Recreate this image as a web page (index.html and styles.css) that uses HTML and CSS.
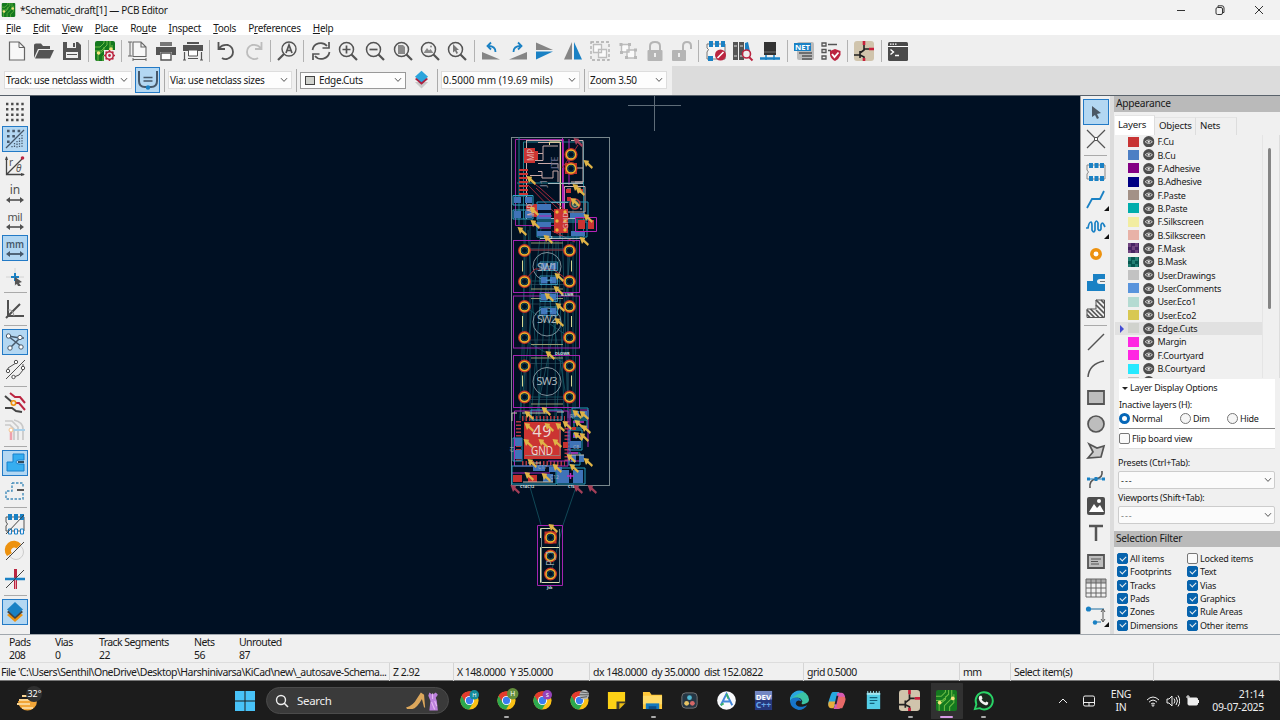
FILE: index.html
```html
<!DOCTYPE html>
<html lang="en">
<head>
<meta charset="utf-8">
<title>PCB Editor</title>
<link rel="stylesheet" href="styles.css">
</head>
<body>
<svg class="defs" aria-hidden="true">
  <defs>
    <symbol id="eye" viewBox="0 0 12 12"><circle cx="6" cy="6" r="5.9" fill="#4d4d4d"/><path d="M2.2 6Q6 2.400 9.800 6Q6 9.600 2.200 6Z" fill="none" stroke="#ddd" stroke-width=".9"/><circle cx="6" cy="6" r="1.1" fill="#eee"/></symbol>
    <symbol id="down" viewBox="0 0 8 6"><path d="M1 1.2L4 4.4L7 1.2" fill="none" stroke="#555" stroke-width="1"/></symbol>
    <symbol id="mag" viewBox="0 0 20 20"><circle cx="8.5" cy="8.5" r="7" fill="none" stroke="#545454" stroke-width="1.5"/><path d="M13.5 13.5L19 19" stroke="#545454" stroke-width="2.2"/></symbol>
    <symbol id="chrome" viewBox="-1 0 22 22"><circle cx="10" cy="11" r="9.5" fill="#fbc116"/><path d="M10 11L1.8 6.2A9.5 9.5 0 0 1 18.3 6.5L10 6.5Z" fill="#e33b2e"/><path d="M10 11L1.8 6.2A9.5 9.5 0 0 0 9.5 20.5L14 13Z" fill="#2da94f"/><path d="M10 6.5H18.3A9.5 9.5 0 0 0 1.8 6.2L6 13Z" fill="#e33b2e"/><circle cx="10" cy="11" r="4.8" fill="#fff"/><circle cx="10" cy="11" r="3.8" fill="#3a7df0"/></symbol>
    <symbol id="board" viewBox="0 0 20 20"><rect width="20" height="20" rx="2" fill="#14791f"/><path d="M0 6H5L9 2V0M0 10H6L12 4V0M3 20V14L9 9V6M8 20V15L15 8V0M13 20V16L17 12V4" fill="none" stroke="#6ebd45" stroke-width="1"/><circle cx="3.5" cy="12" r="1.8" fill="#f4e27c"/><circle cx="16" cy="8" r="1.8" fill="#f4e27c"/></symbol>
    <symbol id="sch" viewBox="0 0 20 20"><rect width="20" height="20" rx="3" fill="#d0c4ac"/><path d="M0 14H6M6 10V17M6 12L10 9V4M6 14L10 16V20M10 8H15" stroke="#222" stroke-width="1.6" fill="none"/><path d="M10 0V4M15 8H20M10 17V20" stroke="#c8203c" stroke-width="2.6"/></symbol>
    <g id="arr"><path d="M-4.500-4L1-3.200L.5-1.300L5 3L3.800 5L-.5 1L-2 3Z"/></g>
    <g id="via"><circle r="5.3" fill="#001023" stroke="#c33429" stroke-width="2.4"/><circle r="4.5" fill="none" stroke="#e9b52d" stroke-width="1.5"/><circle r="3" fill="#001023" stroke="#1a6970" stroke-width=".7"/></g>
    <g id="pair"><rect width="6.5" height="6.5" fill="#4277bd"/><rect x="9" width="6.5" height="6.5" fill="#4277bd"/><path d="M-1-1H16.5V7.5H-1ZM5 3.2H11" fill="none" stroke="#40b8dd" stroke-width=".7"/></g>
    <g id="sw"><rect x="513.5" y="0" width="66" height="52" fill="none" stroke="#a324b0"/><path d="M531 2.5H563M531 48.5H563" stroke="#969b72"/><path d="M522.5 20V31M571.5 20V31" stroke="#d8d78f"/><circle cx="547" cy="26" r="14" fill="none" stroke="#8b9da6" stroke-width=".9"/><rect x="526" y="8" width="42" height="36" fill="none" stroke="#345665" stroke-width=".6"/></g>
  </defs>
</svg>
<div class="app">
  <header class="title"><svg width="15" height="14" viewBox="0 0 20 20"><use href="#board"/></svg><span>*Schematic_draft[1] — PCB Editor</span>
    <div class="winbtns"><svg viewBox="0 0 12 12"><path d="M2 6.5H10"/></svg><svg viewBox="0 0 12 12"><rect x="2" y="3.5" width="6.5" height="7" rx="1.5"/><path d="M4 3V1.8H8Q10 1.8 10 4V8.5H9"/></svg><svg viewBox="0 0 12 12"><path d="M2 2L10 10M10 2L2 10"/></svg></div>
  </header>
  <nav class="menu"><span><u>F</u>ile</span><span><u>E</u>dit</span><span><u>V</u>iew</span><span><u>P</u>lace</span><span>Ro<u>u</u>te</span><span><u>I</u>nspect</span><span><u>T</u>ools</span><span>P<u>r</u>eferences</span><span><u>H</u>elp</span></nav>

  <div class="bar">
    <i><svg viewBox="0 0 20 20"><path d="M2.5 1H12L17.5 6.5V19H2.5Z" fill="#f7f7f7" stroke="#666" stroke-width="1.2"/><path d="M12 1V6.5H17.5" fill="none" stroke="#666"/></svg></i>
    <i><svg viewBox="0 0 20 20"><path d="M0 17V4Q0 2.5 2 2.5H7L9 5H16V8H4Z" fill="#545454"/><path d="M5 9H20L16 17.5H1Z" fill="#545454"/></svg></i>
    <i><svg viewBox="0 0 20 20"><path d="M1 1H16L19 4V19H1Z" fill="#545454"/><path d="M5 1H14V7H5ZM4 11H16V17H4Z" fill="#efefef"/><path d="M11 2H13V6H11ZM5 13H15V14H5Z" fill="#545454"/></svg></i>
    <b></b>
    <i><svg viewBox="0 0 20 20"><use href="#board"/><rect x="9" y="9" width="11" height="11" fill="#efefef"/><circle cx="14.5" cy="14.5" r="3.8" fill="#efefef" stroke="#bb2540" stroke-width="1.6"/><circle cx="14.5" cy="14.5" r="1.4" fill="#bb2540"/><path d="M14.5 9V11M14.5 18V20M9 14.5H11M18 14.5H20M10.6 10.6L12 12M17 17L18.4 18.4M18.4 10.6L17 12M10.6 18.4L12 17" stroke="#bb2540" stroke-width="1.6"/></svg></i>
    <b></b>
    <i><svg viewBox="0 0 20 20"><path d="M5 1H13L18 6V15.5H5ZM13 1V6H18" fill="#f7f7f7" stroke="#666" stroke-width="1.1"/><path d="M2 1V15M0 1H4M0 15H4M5 18.5H18M5 17V20M18 17V20" stroke="#666" stroke-width="1"/></svg></i>
    <i><svg viewBox="0 0 20 20"><path d="M4 1H16V5H4Z" fill="#777"/><path d="M0 6H20V14H16V11H4V14H0Z" fill="#545454"/><path d="M5 12H15V19H5Z" fill="#fff" stroke="#545454" stroke-width="1.4"/></svg></i>
    <i><svg viewBox="0 0 20 20"><path d="M4 1H16V3H4ZM0 4H20V10H0Z" fill="#545454"/><path d="M5.5 9H14.5V15H5.5Z" fill="#fff" stroke="#545454"/><path d="M1.5 11V19M18.5 11V19M0 19H3M17 19H20M5 17.5H15" stroke="#545454" stroke-width="1.2"/></svg></i>
    <b></b>
    <i><svg viewBox="0 0 20 20"><path d="M3 7Q7 3 12 4Q17 6 17 11T11 18Q8 18.500 6 17" fill="none" stroke="#545454" stroke-width="1.800"/><path d="M2.500 1V8H9" fill="none" stroke="#545454" stroke-width="1.8"/></svg></i>
    <i><svg viewBox="0 0 20 20"><path d="M17 7Q13 3 8 4Q3 6 3 11T9 18Q12 18.500 14 17" fill="none" stroke="#bdbdbd" stroke-width="1.800"/><path d="M17.500 1V8H11" fill="none" stroke="#bdbdbd" stroke-width="1.8"/></svg></i>
    <b></b>
    <i><svg viewBox="0 0 20 20"><circle cx="12" cy="8" r="7" fill="none" stroke="#545454" stroke-width="1.4"/><path d="M7 13L1 19" stroke="#545454" stroke-width="2.2"/><path d="M9 12L12 4L15 12M10 9.5H14" fill="none" stroke="#545454" stroke-width="1.7"/></svg></i>
    <b></b>
    <i><svg viewBox="0 0 20 20"><path d="M1.5 9A8.3 8.3 0 0 1 16 5M18.5 11A8.3 8.3 0 0 1 4 15" fill="none" stroke="#545454" stroke-width="1.7"/><path d="M18 1V7H11.500M2 19V13H8.500" fill="none" stroke="#545454" stroke-width="1.700"/></svg></i>
    <i><svg viewBox="0 0 20 20"><use href="#mag"/><path d="M8.5 4.5V12.5M4.5 8.5H12.5" stroke="#545454" stroke-width="1.7"/></svg></i>
    <i><svg viewBox="0 0 20 20"><use href="#mag"/><path d="M4.5 8.5H12.5" stroke="#545454" stroke-width="1.7"/></svg></i>
    <i><svg viewBox="0 0 20 20"><use href="#mag"/><path d="M5 4H10L12 6V13H5Z" fill="#8a8a8a"/></svg></i>
    <i><svg viewBox="0 0 20 20"><use href="#mag"/><path d="M3.5 12L7 7L9 9.5L10.5 8L13.5 12Z" fill="#8a8a8a"/><circle cx="11" cy="5.5" r="1" fill="#8a8a8a"/></svg></i>
    <i><svg viewBox="0 0 20 20"><use href="#mag"/><path d="M6 3L12 9H9.5L11 12L9.5 13L8 10L6 11.5Z" fill="#777"/></svg></i>
    <b></b>
    <i><svg viewBox="0 0 20 20"><path d="M1 11L19 18.5H1Z" fill="#858585"/><path d="M14.500 11Q14.500 5 7.500 5" fill="none" stroke="#1a81c4" stroke-width="1.800"/><path d="M10 1.500L6.500 5L10 8.500" fill="none" stroke="#1a81c4" stroke-width="1.800"/></svg></i>
    <i><svg viewBox="0 0 20 20"><path d="M19 11L1 18.5H19Z" fill="#858585"/><path d="M5.500 11Q5.500 5 12.500 5" fill="none" stroke="#1a81c4" stroke-width="1.800"/><path d="M10 1.500L13.500 5L10 8.500" fill="none" stroke="#1a81c4" stroke-width="1.800"/></svg></i>
    <i><svg viewBox="0 0 20 20"><path d="M1 1.500L18 9H1Z" fill="#858585"/><path d="M1 10.5H18L1 18.5Z" fill="#1a81c4"/></svg></i>
    <i><svg viewBox="0 0 20 20"><path d="M9 1V18.5H1Z" fill="#858585"/><path d="M11 1V18.5H19Z" fill="#1a81c4"/></svg></i>
    <i><svg viewBox="0 0 20 20"><rect x="1" y="1" width="18" height="18" fill="none" stroke="#aaa" stroke-width="1.3" stroke-dasharray="3 2"/><path d="M3.5 3.5H11.5V11.5H3.5ZM8.5 8.5H16.5V16.5H8.5Z" fill="#fafafa" stroke="#bdbdbd" stroke-width="1.3"/></svg></i>
    <i><svg viewBox="0 0 20 20"><path d="M3.5 3.5H11V11H3.5ZM9 9H17V17H9Z" fill="#fafafa" stroke="#bdbdbd" stroke-width="1.4"/><path d="M1.500 2H4.500V5H1.500ZM10 2H13V5H10ZM2 10H5V13H2ZM7 15H10V18H7ZM16 7.500H19V10.500H16ZM16 15H19V18H16Z" fill="#b8b8b8"/></svg></i>
    <i><svg viewBox="0 0 20 20"><path d="M5 9V5Q5 1 10 1T15 5V9" fill="none" stroke="#b5b5b5" stroke-width="2"/><rect x="2.5" y="9" width="15" height="11" rx="1" fill="#b5b5b5"/><path d="M10 12V16" stroke="#eee" stroke-width="2"/></svg></i>
    <i><svg viewBox="0 0 20 20"><path d="M11 9V5Q11 1 15 1T19 5V8" fill="none" stroke="#b5b5b5" stroke-width="2"/><rect x="0" y="9" width="14" height="11" rx="1" fill="#b5b5b5"/><path d="M7 12V16" stroke="#eee" stroke-width="2"/></svg></i>
    <b></b>
    <i><svg viewBox="0 0 20 20"><path d="M1 3V7Q4 8 1 11V18H19V3Z" fill="#f5f5f5" stroke="#777"/><path d="M3 0H7V6H3ZM9 0H13V6H9ZM15 0H19V6H15ZM2 15H7V20H2Z" fill="#1a81c4"/><circle cx="14.5" cy="14" r="5.5" fill="#bb2540"/><path d="M11.5 17L17.5 11" stroke="#fff" stroke-width="1.6"/></svg></i>
    <i><svg viewBox="0 0 20 20"><path d="M0 1H5V19H0ZM6 1H11V19H6Z" fill="#545454"/><path d="M1 5H4M7 5H10M1 15H4M7 15H10" stroke="#ddd"/><path d="M12 2L15 1L18 15H12Z" fill="#1a81c4"/><circle cx="13.5" cy="13" r="4" fill="#eee" stroke="#bb2540" stroke-width="1.6"/><path d="M16 16L19.5 19.5" stroke="#bb2540" stroke-width="2"/></svg></i>
    <i><svg viewBox="0 0 20 20"><path d="M4 1H16V14H4Z" fill="#333"/><path d="M4 11H16" stroke="#777"/><path d="M0 17.500H20" stroke="#1a81c4" stroke-width="2.500"/><path d="M6 14V19M14 14V19" stroke="#1a81c4" stroke-width="1.500"/></svg></i>
    <b></b>
    <i><svg viewBox="0 0 20 20"><rect x="3" y="1" width="17" height="18" rx="2" fill="#bbb"/><path d="M5 12H18M8 15H18M8 18H18" stroke="#555" stroke-width="1.3"/><rect y="2" width="17" height="8" fill="#1a81c4"/><text x="1" y="8.8" font-size="7.5" font-weight="bold" fill="#fff" textLength="15" lengthAdjust="spacingAndGlyphs">NET</text></svg></i>
    <i><svg viewBox="0 0 20 20"><path d="M1 2H5V5H1ZM1 8.500H5V11.5H1ZM1 15H5V18H1Z" fill="none" stroke="#545454" stroke-width="1.3"/><path d="M7 3.500H16M7 9.500H10" stroke="#545454" stroke-width="1.5"/><path d="M9 10L14 8L19.500 10V14Q18 18 14 20Q10 18 9 14Z" fill="#bb2540"/><path d="M11 13L13.500 16L17.500 11.500" fill="none" stroke="#fff" stroke-width="1.8"/></svg></i>
    <b></b>
    <i><svg viewBox="0 0 20 20"><use href="#sch"/></svg></i>
    <b></b>
    <i><svg viewBox="0 0 20 20"><rect y="1" width="20" height="19" rx="1.500" fill="#4a4a4a"/><path d="M0 5.500H20" stroke="#fff"/><path d="M2 3.200H3.500M4.500 3.200H6M7 3.200H8.500" stroke="#fff" stroke-width="1.200"/><path d="M2.500 8.500L5.500 11L2.500 13.500M7 14.500H11" fill="none" stroke="#fff" stroke-width="1.400"/></svg></i>
  </div>

  <div class="bar2">
    <div class="tools2">
      <div class="combo w1"><span>Track: use netclass width</span><svg><use href="#down"/></svg></div>
      <div class="auto"><svg viewBox="0 0 20 20"><path d="M1 1V11Q1 17 7 17H13Q19 17 19 11V1" fill="none" stroke="#46586a" stroke-width="2"/><path d="M5.500 7.500H14.500M5.500 11H14.500" stroke="#46586a" stroke-width="1.300"/><circle cx="10" cy="17.500" r="2.200" fill="#1a81c4"/></svg></div>
      <b></b>
      <div class="combo w2"><span>Via: use netclass sizes</span><svg><use href="#down"/></svg></div>
      <b></b>
      <div class="combo w3"><em></em><span>Edge.Cuts</span><svg><use href="#down"/></svg></div>
      <svg class="lay" viewBox="0 0 16 20"><path d="M1 12L8 19L15 12Z" fill="#c8c8c8"/><path d="M1 9L8 15L15 9L8 5Z" fill="#aa1f3f"/><path d="M8 0L15 6.500L8 12.500L1 6.500Z" fill="#2ba4dc"/></svg>
      <b></b>
      <div class="combo w4"><span>0.5000 mm (19.69 mils)</span><svg><use href="#down"/></svg></div>
      <b></b>
      <div class="combo w5"><span>Zoom 3.50</span><svg><use href="#down"/></svg></div>
    </div>
  </div>

  <main class="work">
    <div class="vbar left">
      <i><svg viewBox="0 0 20 20"><path d="M1 2H19M1 7.300H19M1 12.700H19M1 18H19" stroke="#4a4a4a" stroke-width="2.400" stroke-dasharray="2.400 2.700"/></svg></i>
      <i class="on"><svg viewBox="0 0 20 20"><path d="M2 2H16M2 7.300H10M2 12.700H5" stroke="#46586a" stroke-width="2.600" stroke-dasharray="2.600 2.700"/><path d="M1 19L19 1" stroke="#46586a" stroke-width="1.200"/><path d="M17 6V19M14.500 9V19M12 12V19M9.500 14V19M7 17V19" stroke="#46586a" stroke-width="1.300" stroke-dasharray="1.300 1.300"/></svg></i>
      <i><svg viewBox="0 0 20 20"><path d="M1.500 1V18.500H19M1.500 18.500L17 3" fill="none" stroke="#444" stroke-width="1.300"/><path d="M0 4L1.500 0L3 4M16 17L20 18.500L16 20" fill="#444"/><circle cx="17.500" cy="2" r="1.800" fill="#bb2540"/><text x="4" y="9.500" font-size="10" fill="#555">r</text><text x="11" y="16" font-size="10" font-style="italic" fill="#555">θ</text></svg></i>
      <i><svg viewBox="0 0 20 20"><text x="10" y="10" text-anchor="middle" font-size="12" fill="#505050">in</text><path d="M3 16H17" stroke="#505050" stroke-width="1.600"/><path d="M5 13L1 16L5 19ZM15 13L19 16L15 19Z" fill="#505050"/></svg></i>
      <i><svg viewBox="0 0 20 20"><text x="10" y="10" text-anchor="middle" font-size="11" fill="#505050" textLength="15">mil</text><path d="M3 16H17" stroke="#505050" stroke-width="1.600"/><path d="M5 13L1 16L5 19ZM15 13L19 16L15 19Z" fill="#505050"/></svg></i>
      <i class="on"><svg viewBox="0 0 20 20"><text x="10" y="10" text-anchor="middle" font-size="11" font-weight="600" fill="#46586a" textLength="18" lengthAdjust="spacingAndGlyphs">mm</text><path d="M3 16H17" stroke="#46586a" stroke-width="1.800"/><path d="M5 13L1 16L5 19ZM15 13L19 16L15 19Z" fill="#46586a"/></svg></i>
      <i><svg viewBox="0 0 20 20"><path d="M1 11H19M10 2V20" stroke="#ccc" stroke-width=".800"/><path d="M6 11H14M10 7V15" stroke="#1a81c4" stroke-width="2"/><path d="M10 11L17 16L14 17L16 20H13L12 18L10 19Z" fill="#555"/></svg></i>
      <b></b>
      <i><svg viewBox="0 0 20 20"><path d="M3 1V17H19M1 19L15 5" fill="none" stroke="#505050" stroke-width="2"/><path d="M3 11Q8 10 9 17" fill="none" stroke="#999"/></svg></i>
      <b></b>
      <i class="on"><svg viewBox="0 0 20 20"><path d="M3 4L17 15M5 16L15 6M3 4L15 6H19" stroke="#46586a" stroke-width="1.500" fill="none"/><g fill="#fff" stroke="#46586a"><circle cx="3.500" cy="4" r="2.200"/><circle cx="15" cy="5.500" r="2.200"/><circle cx="5" cy="16" r="2.200"/><circle cx="16" cy="15" r="2.200"/></g></svg></i>
      <i><svg viewBox="0 0 20 20"><path d="M1 20L20 1M3 11V9L11 4M9 18L14 16L18 11V5" stroke="#505050" fill="none"/><g fill="#fff" stroke="#505050"><circle cx="3" cy="12" r="1.700"/><circle cx="11" cy="3" r="1.700"/><circle cx="8.500" cy="18" r="1.700"/><circle cx="18" cy="9" r="1.700"/></g></svg></i>
      <b></b>
      <i><svg viewBox="0 0 20 20"><path d="M5 0L10 4H15L20 10M8 10H14L20 17" stroke="#bb2540" stroke-width="2" fill="none"/><path d="M0 3L8 10M0 15H7L11 18L17 19" stroke="#444" stroke-width="2" fill="none"/><circle cx="8.500" cy="10" r="2.200" fill="#eee" stroke="#ed920f" stroke-width="1.600"/></svg></i>
      <i><svg viewBox="0 0 20 20"><path d="M0 1H7L13 7V20M0 5H5L9 9V20M9 0Q18 2 18 9V20" fill="none" stroke="#c9c9c9" stroke-width="1.700"/><path d="M6 11V20" stroke="#efa1ad" stroke-width="2.500"/><path d="M6 10H20" stroke="#a8d0ea" stroke-width="2"/><circle cx="6" cy="10" r="2" fill="#fff" stroke="#f5c48b"/></svg></i>
      <b></b>
      <i class="on"><svg viewBox="0 0 20 20"><path d="M8 1H19V7H14Q11 7 11 9T14 11H19V18H2V9H8Z" fill="#36aef0" stroke="#1680cc"/><path d="M13 9H19" stroke="#354c5d" stroke-width="2"/></svg></i>
      <i><svg viewBox="0 0 20 20"><path d="M7 2H18V7M18 12V18H1V10H7V2" fill="none" stroke="#418bb9" stroke-width="1.400" stroke-dasharray="2.500 1.500"/><path d="M12 9H19" stroke="#555" stroke-width="2"/></svg></i>
      <b></b>
      <i><svg viewBox="0 0 20 20"><path d="M1 3V8Q4 10 1 12V17H19V3Z" fill="none" stroke="#555"/><path d="M3 0H7V6H3ZM9 0H13V6H9ZM15 0H19V6H15Z" fill="#1a81c4"/><path d="M3.500 15H6.500V20H3.500ZM9.500 15H12.500V20H9.500ZM15.500 15H18.500V20H15.500Z" fill="#eef" stroke="#1a81c4"/><path d="M1 20L19 1" stroke="#444"/></svg></i>
      <i><svg viewBox="0 0 20 20"><circle cx="11" cy="11" r="7.500" fill="none" stroke="#ccc"/><path d="M2 15A8.300 8.300 0 1 1 16 3L11.500 7.500A3 3 0 0 0 7 12Z" fill="#ed920f"/><path d="M1 19L19 1" stroke="#444"/></svg></i>
      <i><svg viewBox="0 0 20 20"><path d="M10.500 0V20" stroke="#bb2540" stroke-width="3"/><path d="M0 10H20" stroke="#1a81c4" stroke-width="2.500"/><path d="M10.500 11V20" stroke="#e79aa6"/><path d="M1 19L19 1" stroke="#444"/></svg></i>
      <b></b>
      <i class="on"><svg viewBox="0 0 20 20"><path d="M2 13L10 20L18 13L10 8Z" fill="#ed920f"/><path d="M2 10L10 17L18 10L10 4Z" fill="#444"/><path d="M10 0L18 7.500L10 15L2 7.500Z" fill="#1a81c4"/></svg></i>
    </div>

    <svg class="canvas" viewBox="30 96 1050 538">
      <path d="M628 105.500H681M654.500 96V131" stroke="#5e6c78"/>
      <g fill="none" stroke="#17606d" stroke-width=".700">
        <path d="M524 212V420M526 212L520 420M530 225V410M545 240L531 418M549 240L538 418M553 240L546 418M556 240L555 418M558 240L564 410M562 225L568 418M568 230V418M573 205V415M577 215L575 410M541 228L520 418M528 230L540 418M560 300L535 420M548 290L570 420M571 242L556 418M530 487L541 525M576 487L563 525L551 573"/>
        <path d="M524 250H569M524 281H569M524 306L569 337M524 397H569M524 340L569 366"/>
      </g>
      <rect x="511.500" y="137.500" width="98" height="348" fill="none" stroke="#78878c"/>

      <g fill="none">
        <path d="M515.500 139.500H563.500V225.500H515.500Z" stroke="#9c229f"/>
        <path d="M523.500 219V142H583.500V237M519 137V225M514 196H532M517 183H584" stroke="#207d8d"/>
        <path d="M526.500 140.500H562M526.500 140V219M538 142.500H560V238M538 153.500H543V146H558M527 160.500H543V153.500M538 163.500H558V168M538 171.500H542V178H553V171H558V182M530 175.500H542" stroke="#c8a9a8"/>
        <path d="M549.500 145V142H560M560.500 142V220" stroke="#e7dc91"/>
        <path d="M564.500 186.500H585V212H564.500ZM567 189H571M580 209H582M571 140.500H583V182H571" stroke="#cdb3b2"/>
        <path d="M562.500 138V212M564 188V212M569 139V185" stroke="#b624b9"/>
        <path d="M528 185L556 214M536 188L568 218M527 178L540 188L568 213M562 168L571 156L578 145M564 218H590M552 231L575 242" stroke="#a1293b"/>
        <path d="M551 218.500H575M551 202.500H568M548 183.500H583M540 238.500H585" stroke="#a8bac0"/>
        <path d="M537 202H588V220H537ZM537 222H587V237H537Z" stroke="#2694b5"/>
      </g>
      <g fill="#cb3432"><path d="M524 148H535V151H538V160H535V163H524ZM526 204H538V217H526ZM554 209H568V233H554Z"/><path d="M519 169H528V171H519ZM519 173H528V175H519ZM519 177H528V179H519ZM519 181H528V183H519ZM519 185H528V187H519ZM519 189H528V191H519ZM519 193H528V195H519ZM566 189H571V193H566ZM578 189H583V193H578ZM567 197H571V201H567ZM578 220H585V229H578ZM588 220H594V229H588Z"/></g>
      <g fill="#3f73b8"><path d="M514 197H521V203H514ZM525 197H532V203H525ZM514 211H521V218H514ZM525 211H532V218H525ZM537 204H551V210H537ZM537 213H551V219H537ZM537 222H551V227H537ZM537 231H551V236H537ZM570 213H585V218H570ZM571 231H585V236H571Z"/></g>
      <path d="M513 195.500H533V205H513ZM513 210H533V219H513Z" fill="none" stroke="#2fa4c5"/>
      <path d="M575.500 217.500H596.500V231.500H575.500ZM539 216H552M539 228H551" fill="none" stroke="#b824b8"/>
      <circle cx="575" cy="204" r="5" fill="#2c4b4c" stroke="#c0403c" stroke-width="1.500"/><circle cx="575" cy="204" r="2.500" fill="none" stroke="#a0b8a0"/>
      <path d="M575 168H583M575 182H583" stroke="#ccb2b1"/>
      <use href="#via" x="571" y="154.500"/><path d="M565 163H577V174H565Z" fill="#bf332b"/><use href="#via" x="571" y="168.500"/>
      <g fill="#e8b739"><circle cx="557" cy="212" r="1.700"/><circle cx="565" cy="212" r="1.700"/><circle cx="557" cy="221" r="1.700"/><circle cx="565" cy="221" r="1.700"/><circle cx="557" cy="230" r="1.700"/><circle cx="565" cy="230" r="1.700"/></g>
      <g class="ptext" fill="#e2afad"><text transform="translate(533.500 161) rotate(-90)" font-size="8">MP</text><text transform="translate(533.500 216) rotate(-90)" font-size="8">MP</text><text transform="translate(568 229) rotate(-90)" font-size="7.500">GND</text><text transform="translate(558 169) rotate(-90)" font-size="9" fill="#6d718f">JTE</text><text transform="translate(547 187) rotate(-90)" font-size="9" fill="#838597">J1</text></g>

      <use href="#sw" y="240.500"/><use href="#sw" y="296"/><use href="#sw" y="355.500"/>
      <path d="M524 250H570M524 281L535 269H553L569 281" fill="none" stroke="#a52c39"/>
      <g><use href="#via" x="524.500" y="250.500"/><use href="#via" x="569.500" y="250.500"/><use href="#via" x="524.500" y="281.500"/><use href="#via" x="569.500" y="281.500"/><use href="#via" x="524.500" y="306.500"/><use href="#via" x="569.500" y="306.500"/><use href="#via" x="524.500" y="337.500"/><use href="#via" x="569.500" y="337.500"/><use href="#via" x="524.500" y="366"/><use href="#via" x="569.500" y="366"/><use href="#via" x="524.500" y="397"/><use href="#via" x="569.500" y="397"/></g>
      <g><use href="#pair" x="541" y="263"/><use href="#pair" x="541" y="277"/><use href="#pair" x="541" y="294"/><use href="#pair" x="541" y="308"/></g>
      <g class="ptext" fill="#aab4ba" font-size="11" text-anchor="middle"><text x="547" y="270.500" textLength="20">SW1</text><text x="547" y="323" textLength="20">SW2</text><text x="547" y="385" textLength="21">SW3</text></g>
      <g class="ptext" fill="#dbe0e0" font-size="4" font-weight="bold"><text x="561" y="295.500">B.LWR</text><text x="555" y="355">DLOWR</text><text x="547" y="589">Jtk</text><text x="520" y="488">C14C12</text><text x="568" y="488">C18</text><text x="545" y="239">R12</text></g>

      <g stroke="#b13940" fill="none"><path d="M522 418.500H565M522 463.500H565" stroke-width="5" stroke-dasharray="1.500 2"/><path d="M518.500 421V462M567 421V462" stroke-width="5" stroke-dasharray="1.500 2"/></g>
      <path d="M524 422H561V459H524Z" fill="#cb3432"/><path d="M525 455.500H560V427" fill="none" stroke="#9f7773"/>
      <path d="M514.500 411H568V466H514.500ZM512 473H550M548 461H584M570 409V455M580 410H588V447" fill="none" stroke="#ad26b3"/>
      <path d="M513 438H522V461H513ZM512 466H556V484H512ZM557 468H585V484H557ZM569 430H582V450H569ZM569 453H580V465H569ZM572 408H588V418H572ZM574 420H587V428H574ZM531 410H562V420H531Z" fill="none" stroke="#249dbd"/>
      <path d="M515 438H522V446H515ZM515 450H522V459H515ZM557 470H569V483H557ZM573 470H583V483H573ZM543 474H553V482H543ZM573 411H579V417H573ZM581 411H587V417H581ZM570 441H576V448H570ZM576 441H581V448H576ZM571 455H576V462H571ZM579 455H584V462H579ZM533 465H545V471H533ZM549 467H562V472H549ZM573 433H578V438H573Z" fill="#3f73b8"/>
      <path d="M513 475H522V482H513ZM528 475H537V482H528ZM572 427H576V430H572ZM563 442H568V448H563Z" fill="#c6312f"/><path d="M567 476H574M570.500 473V479M573 422H584M573 436H583M571 453H578" stroke="#bf2cc1" stroke-width="1.500"/>
      <path d="M522 413H547M512 421V413H517M557 412H564M528 463H541M571 455H584M523 482H553" stroke="#c6c8b8" fill="none"/>
      <g class="ptext" fill="#ebd8d4" text-anchor="middle"><text x="542" y="437" font-size="16" textLength="19">49</text><text x="542" y="455" font-size="12" textLength="22" lengthAdjust="spacingAndGlyphs">GND</text></g>
      <g class="ptext" font-size="5" fill="#a2acb6"><text x="550" y="479">C12</text><text x="538" y="469">C17</text><text x="570" y="418">R7</text><text x="573" y="449">C8</text><text transform="translate(514 452) rotate(-90)">C1</text></g>

      <path d="M537.500 525.500H562.500V585.500H537.500Z" fill="none" stroke="#a424b0"/><path d="M540.500 547.500H559.500V582.500H540.500ZM540.500 538V528.500H550" fill="none" stroke="#dedfb1"/><path d="M541.500 529V583M559.500 529V583" stroke="#73868a"/>
      <path d="M544.500 531.500H556.500V543.500H544.500Z" fill="#c33429"/><use href="#via" x="550.500" y="537.500"/><use href="#via" x="550.500" y="556"/><use href="#via" x="550.500" y="574"/><g class="ptext"><text transform="translate(554 566) rotate(-90)" font-size="10" fill="#9ba5a9">P_1</text></g>
      <g fill="#dfb447"><use href="#arr" x="588" y="164"/><use href="#arr" x="531" y="180"/><use href="#arr" x="577" y="188"/><use href="#arr" x="580" y="191"/><use href="#arr" x="575" y="202"/><use href="#arr" x="534" y="211"/><use href="#arr" x="535" y="224"/><use href="#arr" x="522" y="231"/><use href="#arr" x="548" y="239"/><use href="#arr" x="588" y="218"/><use href="#arr" x="584" y="241"/><use href="#arr" x="559" y="277"/><use href="#arr" x="558" y="290"/><use href="#arr" x="549" y="297"/><use href="#arr" x="560" y="307"/><use href="#arr" x="559" y="322"/><use href="#arr" x="550" y="355"/><use href="#arr" x="546" y="411"/><use href="#arr" x="529" y="415"/><use href="#arr" x="577" y="414"/><use href="#arr" x="584" y="415"/><use href="#arr" x="529" y="427"/><use href="#arr" x="549" y="427"/><use href="#arr" x="560" y="427"/><use href="#arr" x="567" y="425"/><use href="#arr" x="579" y="424"/><use href="#arr" x="586" y="429"/><use href="#arr" x="578" y="436"/><use href="#arr" x="584" y="437"/><use href="#arr" x="528" y="443"/><use href="#arr" x="543" y="443"/><use href="#arr" x="557" y="443"/><use href="#arr" x="532" y="463"/><use href="#arr" x="557" y="468"/><use href="#arr" x="571" y="458"/><use href="#arr" x="588" y="462"/><use href="#arr" x="574" y="468"/><use href="#arr" x="546" y="477"/><use href="#arr" x="529" y="476"/><use href="#arr" x="553" y="528"/></g>
      <g fill="#a43f58"><use href="#arr" x="515" y="489"/><use href="#arr" x="578" y="489"/><use href="#arr" x="592" y="489"/><use href="#arr" x="578" y="142"/></g>
    </svg>

    <div class="vbar right">
      <i class="on"><svg viewBox="0 0 20 20"><path d="M6 4L15 11L11 12L13 16L11 17L9 13L6 15Z" fill="#4b5865"/></svg></i>
      <i><svg viewBox="0 0 20 20"><path d="M1 1L19 19M19 1L1 19" stroke="#545454" stroke-width="1.200"/><path d="M8.500 8.500H11.500V11.500H8.500Z" fill="#fff" stroke="#545454"/></svg></i><b></b>
      <i><svg viewBox="0 0 20 20"><path d="M1 3V8Q4 10 1 12V17H19V3Z" fill="none" stroke="#888"/><path d="M3 1H7V6H3ZM8.500 1H12.500V6H8.500ZM14 1H18V6H14ZM3 14H7V19H3ZM8.500 14H12.500V19H8.500ZM14 14H18V19H14Z" fill="#1a81c4"/></svg></i>
      <i class="more"><svg viewBox="0 0 20 20"><path d="M1 18L6 9H14L18 1" fill="none" stroke="#1a81c4" stroke-width="1.800"/></svg></i>
      <i class="more"><svg viewBox="0 0 20 20"><path d="M0 11H2Q3 5 5 5Q6 5 6 9V13Q8 17 9 13V6Q10.500 2 12 6V12Q13.500 15 15 12V8Q16 4 18 8L19 10" fill="none" stroke="#1a81c4" stroke-width="1.700"/></svg></i>
      <i><svg viewBox="0 0 20 20"><circle cx="10" cy="10" r="4.200" fill="#fff" stroke="#ed920f" stroke-width="3.500"/></svg></i>
      <i><svg viewBox="0 0 20 20"><path d="M7 2H19V7H14Q11 7 11 9.500T14 12H19V19H1V9H7Z" fill="#1a81c4"/><path d="M14 9.500H19" stroke="#777"/></svg></i>
      <i><svg viewBox="0 0 20 20"><path d="M10 1H18.500V18.500H1V10H10Z" fill="none" stroke="#545454"/><path d="M10 1L18.500 9.500M10 6L18.500 14.500M10 11L17.500 18.500M15 1L18.500 4.500M4.500 10L13 18.500M1 11L8.500 18.500M1 15.500L4 18.500" stroke="#545454" stroke-width="1.700"/></svg></i><b></b>
      <i><svg viewBox="0 0 20 20"><path d="M2 18L18 2" stroke="#545454" stroke-width="1.500"/></svg></i>
      <i><svg viewBox="0 0 20 20"><path d="M2 18Q3 5 18 2" fill="none" stroke="#545454" stroke-width="1.500"/></svg></i>
      <i><svg viewBox="0 0 20 20"><path d="M2 4H18V17H2Z" fill="#bdbdbd" stroke="#545454" stroke-width="1.800"/></svg></i>
      <i><svg viewBox="0 0 20 20"><circle cx="10" cy="10" r="8" fill="#bdbdbd" stroke="#545454" stroke-width="1.700"/></svg></i>
      <i><svg viewBox="0 0 20 20"><path d="M3 3L11 7L18 5L15 16L2 17L7 11Z" fill="#ccc" stroke="#545454" stroke-width="1.700"/></svg></i>
      <i><svg viewBox="0 0 20 20"><path d="M4 19Q3 11 10 10T16 2" fill="none" stroke="#545454" stroke-width="1.600"/><path d="M1 10H19" stroke="#1a81c4"/><path d="M1 10H4M16 10H19M10 8V12" stroke="#1a81c4" stroke-width="3"/></svg></i>
      <i><svg viewBox="0 0 20 20"><rect x="1" y="1" width="18" height="18" rx="2" fill="#4d4d4d"/><path d="M3 16L8 8L11 12L14 9L18 16Z" fill="#fff"/><circle cx="13" cy="5" r="2" fill="#fff"/></svg></i>
      <i><svg viewBox="0 0 20 20"><path d="M3 3H17M10 3V18" stroke="#545454" stroke-width="2.500"/></svg></i>
      <i><svg viewBox="0 0 20 20"><path d="M2 4H18V17H2Z" fill="#bdbdbd" stroke="#545454" stroke-width="1.800"/><path d="M5 8H15M5 10.500H12M5 13H13" stroke="#545454"/></svg></i>
      <i><svg viewBox="0 0 20 20"><path d="M0 1H20V5H0Z" fill="#aaa"/><path d="M0 1H20V19H0ZM5 1V19M10 1V19M15 1V19M0 5H20M0 10H20M0 15H20" fill="none" stroke="#666"/></svg></i>
      <i class="more"><svg viewBox="0 0 20 20"><path d="M3 4H18M8 17H15" stroke="#1a6d9f"/><path d="M17 5V16M15 7L17 4L19 7M15 14L17 17L19 14" stroke="#555" fill="none"/><circle cx="2.500" cy="4" r="2.600" fill="#1a81c4"/><circle cx="9" cy="17.500" r="2.200" fill="#1a81c4"/></svg></i>
    </div>

    <aside>
      <h2>Appearance</h2>
      <div class="tabs"><span class="sel">Layers</span><span>Objects</span><span>Nets</span></div>
      <div class="layers">
        <ul>
          <li><s class="red"></s><svg><use href="#eye"/></svg>F.Cu</li><li><s class="blue"></s><svg><use href="#eye"/></svg>B.Cu</li><li><s class="purple"></s><svg><use href="#eye"/></svg>F.Adhesive</li><li><s class="navy"></s><svg><use href="#eye"/></svg>B.Adhesive</li><li><s class="taupe"></s><svg><use href="#eye"/></svg>F.Paste</li><li><s class="teal"></s><svg><use href="#eye"/></svg>B.Paste</li><li><s class="lemon"></s><svg><use href="#eye"/></svg>F.Silkscreen</li><li><s class="pink"></s><svg><use href="#eye"/></svg>B.Silkscreen</li><li><s class="fmask"></s><svg><use href="#eye"/></svg>F.Mask</li><li><s class="bmask"></s><svg><use href="#eye"/></svg>B.Mask</li><li><s class="gray"></s><svg><use href="#eye"/></svg>User.Drawings</li><li><s class="sky"></s><svg><use href="#eye"/></svg>User.Comments</li><li><s class="mint"></s><svg><use href="#eye"/></svg>User.Eco1</li><li><s class="gold"></s><svg><use href="#eye"/></svg>User.Eco2</li><li class="cur"><s class="cuts"></s><svg><use href="#eye"/></svg>Edge.Cuts</li><li><s class="mag"></s><svg><use href="#eye"/></svg>Margin</li><li><s class="mag"></s><svg><use href="#eye"/></svg>F.Courtyard</li><li><s class="cyan"></s><svg><use href="#eye"/></svg>B.Courtyard</li><li><s class="gray"></s><svg><use href="#eye"/></svg></li>
        </ul>
        <div class="scroll"></div>
      </div>
      <section class="opts">
        <h3>Layer Display Options</h3>
        <p>Inactive layers (H):</p>
        <div class="radios"><label><em class="r ron"></em>Normal</label><label><em class="r"></em>Dim</label><label><em class="r"></em>Hide</label></div>
        <div class="flip"><em class="c"></em>Flip board view</div>
      </section>
      <section class="pre"><p>Presets (Ctrl+Tab):</p><div class="pick">---<svg><use href="#down"/></svg></div><p>Viewports (Shift+Tab):</p><div class="pick dim">---<svg><use href="#down"/></svg></div></section>
      <h2>Selection Filter</h2>
      <div class="filter"><span><em class="c k"></em>All items</span><span><em class="c"></em>Locked items</span><span><em class="c k"></em>Footprints</span><span><em class="c k"></em>Text</span><span><em class="c k"></em>Tracks</span><span><em class="c k"></em>Vias</span><span><em class="c k"></em>Pads</span><span><em class="c k"></em>Graphics</span><span><em class="c k"></em>Zones</span><span><em class="c k"></em>Rule Areas</span><span><em class="c k"></em>Dimensions</span><span><em class="c k"></em>Other items</span></div>
    </aside>
  </main>

  <div class="stats"><div>Pads<br>208</div><div>Vias<br>0</div><div>Track Segments<br>22</div><div>Nets<br>56</div><div>Unrouted<br>87</div></div>
  <div class="status"><span class="file">File 'C:\Users\Senthil\OneDrive\Desktop\Harshinivarsa\KiCad\new\_autosave-Schema...</span><span>Z 2.92</span><span>X 148.0000&nbsp; Y 35.0000</span><span>dx 148.0000&nbsp; dy 35.0000&nbsp; dist 152.0822</span><span>grid 0.5000</span><span>mm</span><span>Select item(s)</span><span></span></div>

  <footer>
    <div class="weather"><svg viewBox="0 0 30 30"><path d="M5 15H24A9.500 9.500 0 0 1 5 15Z" fill="#f2a638"/><path d="M9 10H15M6 14H20M4 18H17M9 22H20" stroke="#f9d493" stroke-width="2"/><circle cx="21" cy="8" r="8" fill="#303030"/><text x="14.500" y="11" font-size="9.500" fill="#fff" textLength="14" lengthAdjust="spacingAndGlyphs">32°</text></svg></div>
    <svg class="start" viewBox="0 0 20 20"><path d="M0 0H9.500V9.500H0ZM10.500 0H20V9.500H10.500ZM0 10.500H9.500V20H0ZM10.500 10.500H20V20H10.500Z" fill="#48c2f8"/></svg>
    <div class="search"><svg viewBox="0 0 14 14"><circle cx="6" cy="6" r="4.500" fill="none" stroke="#eee" stroke-width="1.400"/><path d="M9 9L13 13" stroke="#eee" stroke-width="1.600"/></svg><span>Search</span><svg class="shoe" viewBox="0 0 32 22"><path d="M0 17Q7 15 10 9L14 3L17 5L18 17H17L15 9Q10 18 6 18.500H1Z" fill="#dca75c"/><path d="M22 3L25 5L28 3L30 5L28 8L29 11L30 20H22L23 11L21 6Z" fill="#bb80dc"/><path d="M25 4V9M24 12L27 19M27 11L29 16" stroke="#e6b8f2" stroke-width="1"/></svg></div>
    <div class="apps">
      <i><svg viewBox="0 0 22 22"><use href="#chrome"/><circle cx="16" cy="5" r="5" fill="#138b9a"/><text x="14" y="7.200" font-size="6" fill="#fff">H</text></svg></i>
      <i class="run"><svg viewBox="0 0 22 22"><use href="#chrome"/><circle cx="17.500" cy="4" r="6" fill="#648f3c"/><text x="15" y="6.500" font-size="7" fill="#fff">H</text></svg></i>
      <i><svg viewBox="0 0 22 22"><use href="#chrome"/><circle cx="16" cy="5" r="5" fill="#9442b9"/><text x="14.300" y="7.200" font-size="6" fill="#fff">S</text></svg></i>
      <i><svg viewBox="0 0 22 22"><use href="#chrome"/><circle cx="16" cy="5" r="5" fill="#b4b8ba"/><path d="M12 2L20 3M11 5H21M12 8L19 7" stroke="#555"/></svg></i>
      <i><svg viewBox="0 0 22 22"><path d="M2 2H20V14L14 20H2Z" fill="#fcd116"/><path d="M11 20V12H20V14L14 20Z" fill="#423d2c"/><path d="M14 20V14H20" fill="#eabc16"/></svg></i>
      <i class="run"><svg viewBox="0 0 22 22"><path d="M1 2H8L10 5H21V20H1Z" fill="#ffc83a"/><path d="M1 6H21V15H1Z" fill="#ffdb68"/><path d="M4 14H18V20H4Z" fill="#1479be"/><path d="M7 17H15V20H7Z" fill="#0a4d87"/></svg></i>
      <i><svg viewBox="0 0 22 22"><rect x="3" y="3" width="16" height="16" rx="4" fill="#253644" stroke="#777"/><circle cx="11" cy="8" r="2.500" fill="#50b8d2"/><circle cx="8" cy="14" r="2.500" fill="#e6c365"/><circle cx="14" cy="14" r="2.500" fill="#d56766"/></svg></i>
      <i><svg viewBox="0 0 22 22"><circle cx="11" cy="11" r="9.800" fill="#f7f8fb"/><path d="M5 16L11 4L17 16M7 12H15" fill="none" stroke="#4285d9" stroke-width="2"/><path d="M11 4L13 9M5 16L8 14" stroke="#3bb36c" stroke-width="2"/></svg></i>
      <i><svg viewBox="0 0 22 22"><rect x="2" y="1" width="18" height="20" fill="#26377c"/><path d="M2 1H20V10H2Z" fill="#7387c3"/><text x="3" y="10" font-size="8" font-weight="bold" fill="#fff" textLength="16" lengthAdjust="spacingAndGlyphs">DEV</text><text x="3" y="19" font-size="9" font-weight="bold" fill="#66a5e7" textLength="16" lengthAdjust="spacingAndGlyphs">C++</text></svg></i>
      <i><svg viewBox="0 0 22 22"><path d="M1 12A10 10 0 0 1 21 10Q21 14 15 15Q12 15 14 12Q13 8 9 8Q3 8 1 12Z" fill="#3bc4a4"/><path d="M1 11A10 10 0 0 1 16 2Q9 3 3 9Z" fill="#2aa6de"/><path d="M1 12Q3 7 9 8Q13 9 13 12Q8 9 7 14Q8 19 16 17L19 16Q16 21 10 21Q2 19 1 12Z" fill="#1775c9"/></svg></i>
      <i><svg viewBox="0 0 22 22"><path d="M7 2H14L10 16Q9 19 5 18Q1 17 3 11L5 5Q6 2 7 2Z" fill="#27a7df"/><path d="M12 3H16Q19 3 20 7L15 19Q14 20 8 20L10 14Z" fill="#d75ab4"/><path d="M3 12H10L8 19H5Q1 18 3 12Z" fill="#e6ad3c"/><path d="M13 7H19Q22 8 19 15L17 19H11Z" fill="#e76968"/><path d="M11 6H13L11 15H9Z" fill="#202330"/></svg></i>
      <i><svg viewBox="0 0 22 22"><path d="M4 3H18V20H4Z" fill="#54cee7"/><path d="M4 3H18V5H4Z" fill="#a9e6ef"/><path d="M7 8H15M7 11H15M7 14H12" stroke="#12617a" stroke-width="1.300"/><path d="M5 1V4M8 1V4M11 1V4M14 1V4M17 1V4" stroke="#9be0ed"/></svg></i>
      <i class="run"><svg viewBox="0 0 20 20"><use href="#sch"/></svg></i>
      <i class="run active"><svg viewBox="0 0 20 20"><use href="#board"/></svg></i>
      <i class="run"><svg viewBox="0 0 22 22"><path d="M2 20L3.500 15A9 9 0 1 1 7 19Z" fill="#1b2b20" stroke="#29d366" stroke-width="2"/><path d="M7 6L9 6L10 9L9 10Q10 12 13 13L14 12L16 13Q16 16 13 16Q7 14 6 9Q6 7 7 6Z" fill="#f3f3f3"/></svg></i>
    </div>
    <div class="tray"><svg viewBox="0 0 14 14"><path d="M3 9L7 5L11 9" /></svg><svg viewBox="0 0 14 14"><rect x="1.500" y="2" width="11" height="10" rx="1.500"/><path d="M1.500 8.500H12.500M7 8.500V12"/></svg><div class="lang">ENG<br>IN</div><svg viewBox="0 0 14 14"><path d="M1 6Q7 0 13 6M3 8.200Q7 4 11 8.200M5 10Q7 8 9 10"/><circle cx="7" cy="11.500" r=".8"/></svg><svg viewBox="0 0 14 14"><path d="M1 5H3L6 2V12L3 9H1ZM8 4.500Q10 7 8 9.500M10 3Q13 7 10 11M12 1.500Q15.500 7 12 12.500"/></svg><svg viewBox="0 0 14 14"><rect x="2" y="4" width="9.500" height="7" rx="1" fill="#eee"/><path d="M12.500 6V9M2 1V5M0 3H4"/></svg><div class="clock">21:14<br>09-07-2025</div></div>
  </footer>
</div>
</body>
</html>
```
FILE: styles.css
```css
* { box-sizing: border-box; }
body { margin: 0; width: 1280px; height: 720px; overflow: hidden; font-family: "Noto Sans", "Open Sans", sans-serif; font-size: 10px; color: #191919; }
.defs { display: block; width: 0; height: 0; }
.app { height: 720px; display: flex; flex-direction: column; background: #f0f0f0; }
i, em { font-style: normal; }
i svg { overflow: visible; }
ul, h2, h3, p { margin: 0; padding: 0; font-weight: normal; }
.title { height: 20px; display: flex; align-items: center; background: #f2f2f2; padding-left: 1px; gap: 4px; font-size: 10px; letter-spacing: -.32px; }
.winbtns { margin-left: auto; display: flex; gap: 27px; padding-right: 15px; }
.winbtns svg { width: 12px; height: 12px; fill: none; stroke: #333; stroke-width: 1; }
.menu { height: 15px; background: #fff; display: flex; align-items: center; padding-left: 6px; gap: 12.2px; font-size: 10px; letter-spacing: -.3px; }
.menu u { text-underline-offset: 1px; }
.bar { height: 31px; display: flex; align-items: center; padding-left: 3.3px; background: #efefef; }
.bar i { width: 27.36px; flex: none; display: flex; justify-content: center; }
.bar svg { width: 20px; height: 20px; }
.bar b { width: 1px; height: 22px; background: #b2b2b2; margin: 0 2.5px; flex: none; }
.bar2 { height: 30px; background: #dcdcdc; border-bottom: 1px solid #59626b; padding-right: 608px; }
.tools2 { height: 29px; width: 672px; display: flex; align-items: center; background: #efefef; padding: 0 0 1px 4px; }
.tools2 b { width: 1px; height: 23px; background: #aaa; flex: none; margin: 0 3.5px; }
.combo { height: 18px; background: #fdfdfd; border: 1px solid #ddd; display: flex; align-items: center; padding: 0 3px 0 1px; white-space: nowrap; letter-spacing: -.32px; flex: none; }
.combo svg { width: 8px; height: 6px; margin-left: auto; flex: none; }
.combo em { width: 10px; height: 9px; background: #d0d2cd; border: 1px solid #444; margin: 0 4px 0 3px; }
.w1 { width: 128px; }
.w2 { width: 124px; }
.w3 { width: 105.5px; height: 17px; border-color: #999; }
.w4 { width: 139px; letter-spacing: .05px; }
.w5 { width: 79px; }
.auto { width: 25px; height: 26px; margin-left: 3px; border: 1px solid #237ac6; background: #b3d7f2; display: grid; place-items: center; flex: none; }
.auto svg { width: 20px; height: 20px; }
.lay { width: 15px; height: 20px; margin: 0 4.5px 0 8px; flex: none; }
.work { height: 538px; display: flex; background: #dcdcdc; }
.vbar { width: 30px; display: flex; flex-direction: column; align-items: center; padding-top: 2px; background: #f0f0f0; flex: none; }
.vbar i { width: 26px; height: 27.32px; flex: none; display: grid; place-items: center; position: relative; }
.vbar svg { width: 20px; height: 20px; }
.vbar b { width: 23px; height: 1px; background: #aaa; margin: 2.5px 0; flex: none; }
.vbar .on { border: 1px solid #237ac6; background: #b3d7f2; height: 26px; margin: .66px 0; }
.right { border-left: 1px solid #999; }
.more::after { content: ""; position: absolute; right: 0; bottom: 2px; border-left: 5px solid transparent; border-bottom: 5px solid #111; }
.canvas { width: 1050px; height: 538px; background: #001023; flex: none; }
.ptext { font-family: "Noto Sans", sans-serif; }
aside { width: 166px; margin-left: 4px; background: #f0f0f0; display: flex; flex-direction: column; font-size: 9px; letter-spacing: -.22px; }
h2 { height: 16px; line-height: 15px; background: #bababa; padding-left: 2px; font-size: 10.2px; letter-spacing: -.25px; flex: none; }
.tabs { height: 23px; display: flex; align-items: flex-end; padding: 0 0 0 1px; flex: none; font-size: 9.7px; }
.tabs span { width: 41px; height: 18px; line-height: 15px; padding-left: 4px; border-right: 1px solid #ddd; border-top: 1px solid #e4e4e4; }
.tabs .sel { width: 40px; padding-left: 3px; height: 20px; line-height: 17px; background: #fff; }
.layers { height: 243px; border: solid #ddd; border-width: 0 1px 0 0; display: flex; overflow: hidden; padding: 0 0 0 1px; flex: none; }
.layers ul { width: 148px; list-style: none; border-right: 1px solid #e5e5e5; }
.layers li { height: 13.35px; display: flex; align-items: center; padding-left: 13px; position: relative; }
.layers s { width: 11px; height: 10px; margin-right: 4px; }
.layers li svg { width: 11.5px; height: 11.5px; margin-right: 3px; }
.layers .cur { background: #e1e1e1; }
.cur::before { content: ""; position: absolute; left: 5px; top: 3px; border: 4px solid transparent; border-left-color: #424bd3; border-right: 0; }
.scroll { width: 3px; height: 161px; background: #858585; margin: 13px 0 0 5px; border-radius: 2px; }
.red { background: #c83434; } .blue { background: #4d7fc4; } .purple { background: #840084; } .navy { background: #000084; }
.taupe { background: #a39187; } .teal { background: #00adac; } .lemon { background: #f2eda1; } .pink { background: #e8b2a7; }
.fmask { background: repeating-conic-gradient(#472564 0 25%, #704580 0 50%) 0 0 / 7px 7px; }
.bmask { background: repeating-conic-gradient(#075750 0 25%, #248276 0 50%) 0 0 / 7px 7px; }
.gray { background: #c2c2c2; } .sky { background: #5994dc; } .mint { background: #b4dbd2; } .gold { background: #d8c852; }
.cuts { background: #d0d2cd; } .mag { background: #ff26e2; } .cyan { background: #26e9ff; }
.opts { height: 70px; margin: 1px 5px 0 5px; background: #fff; flex: none; padding: 1px 0 0; border-bottom: 1px solid #ddd; }
.opts h3 { font-size: 9px; height: 18px; line-height: 16px; padding-left: 11px; position: relative; }
.opts h3::before { content: ""; position: absolute; left: 3px; top: 7px; border: 3px solid transparent; border-top-color: #222; border-bottom: 0; }
.opts p { height: 14px; line-height: 14px; }
.radios { display: grid; grid-template-columns: 61px 47px 40px; height: 17px; border-bottom: 1px solid #888; padding-bottom: 4px; }
label, .flip, .filter span { display: flex; align-items: center; gap: 2px; white-space: nowrap; }
.flip { height: 18px; }
.r { width: 11px; height: 11px; border: 1px solid #777; border-radius: 50%; background: #f6f6f6; }
.ron { border: 3.5px solid #0667b8; background: #fff; }
.c { width: 11px; height: 11px; border: 1px solid #777; border-radius: 2px; background: #fafafa; display: grid; place-items: center; }
.k { background: #0763ad; border-color: #0763ad; }
.k::after { content: ""; width: 5px; height: 3px; border: solid #eee; border-width: 0 0 1px 1px; rotate: -45deg; translate: 0 -1px; }
.pre { height: 82px; padding: 7px 5px 0 4px; flex: none; }
.pre p { height: 15px; line-height: 14px; }
.pick { height: 18px; background: #fbfbfb; border: 1px solid #ccc; border-radius: 2px; margin-bottom: 2px; display: flex; align-items: center; padding: 0 2px; letter-spacing: 1px; }
.pick svg { margin-left: auto; width: 8px; height: 6px; }
.dim { color: #777; }
.filter { display: grid; grid-template-columns: 70px 90px; grid-auto-rows: 13.3px; padding: 5px 3px; }
.stats { height: 28px; border-top: 1px solid #a1a7ad; font-size: 10.5px; line-height: 13px; letter-spacing: -.58px; display: grid; grid-template-columns: 46px 44px 95px 45px 80px; padding-left: 9px; padding-top: 1px; white-space: nowrap; }
.status { height: 19px; border-top: 1px solid #ddd; border-bottom: 1px solid #777; display: grid; grid-template-columns: 390px 64px 136px 214px 156px 51px 143px 1fr; font-size: 10.5px; line-height: 18px; letter-spacing: -.52px; white-space: nowrap; }
.status span { padding-left: 3px; border-right: 1px solid #d5d5d5; }
.status .file { padding-left: 1px; }
footer { height: 39px; background: #1c1c1c; display: flex; align-items: center; color: #eee; }
.weather { width: 235px; padding-left: 13px; }
.weather svg { width: 30px; height: 30px; display: block; overflow: visible; }
.start { width: 20px; height: 20px; }
.search { width: 183px; height: 27px; margin-left: 11px; border: 1px solid #4b4b4b; border-radius: 14px; background: #3a3a3a; display: flex; align-items: center; padding: 0 8px; font-size: 11.5px; letter-spacing: -.3px; }
.search svg { width: 14px; height: 14px; margin-right: 8px; }
.search .shoe { width: 34px; height: 24px; margin: 0 0 0 auto; }
.apps { display: flex; margin-left: 2px; }
.apps i { width: 36.72px; height: 36px; display: grid; place-items: center; position: relative; }
.apps svg { width: 21px; height: 21px; }
.run::after { content: ""; width: 5px; height: 2px; border-radius: 2px; background: #aaa; position: absolute; bottom: 1px; left: 16px; }
.active { background: linear-gradient(#313131, #313131) center / 32px 100% no-repeat; border-radius: 4px; }
.active::after { width: 13px; left: 12px; background: #d79be6; }
.tray { margin-left: auto; display: flex; align-items: center; padding-right: 16px; font-size: 10.5px; line-height: 13px; letter-spacing: -.3px; }
.tray svg { width: 14px; height: 14px; fill: none; stroke: #eee; stroke-width: 1; margin-right: 6px; }
.tray svg:first-child { margin-right: 12px; }
.lang { text-align: center; margin: 0 15px 0 9px; }
.clock { text-align: right; margin-left: 6px; }
```
